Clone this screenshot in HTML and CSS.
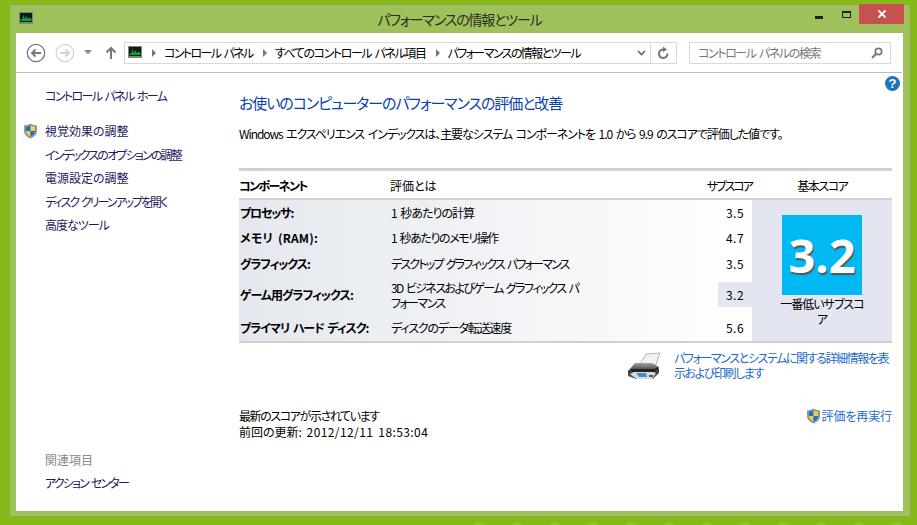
FILE: index.html
```html
<!DOCTYPE html>
<html lang="ja">
  <head>
    <meta charset="UTF-8" />
    <title>パフォーマンスの情報とツール</title>
    <link rel="stylesheet" href="styles.css">
  </head>
  <body>
    <div class="window">
      <div class="titlebar">
        <svg class="app-icon" width="14" height="13" viewBox="0 0 14 13"><rect width="14" height="12" fill="#7c8580"/><rect x="1" y="1" width="12" height="9" fill="#0c1f16"/><path d="M1.5 9 V7.5 L3.5 7 L4.5 3 L6 7 L7.5 4 L9 7 L11 5.5 L12.5 7 V9 Z" fill="#1f9a33"/></svg>
        <div class="title">パフォーマンスの情報とツール</div>
        <div class="win-btns">
          <div class="btn-min"></div>
          <div class="btn-max"></div>
          <div class="btn-close">
            <svg width="10" height="10" viewBox="0 0 10 10"><path d="M1.5 1.5 L8.5 8.5 M8.5 1.5 L1.5 8.5" stroke="#fff" stroke-width="1.8"/></svg>
          </div>
        </div>
      </div>
      <div class="client">
        <div class="toolbar">
          <svg class="nav" width="20" height="20" viewBox="0 0 20 20"><circle cx="10" cy="10" r="8.7" fill="#fff" stroke="#777" stroke-width="1.3"/><path d="M15 10 H6 M9.5 6.5 L6 10 L9.5 13.5" fill="none" stroke="#777" stroke-width="2"/></svg>
          <svg class="nav" width="20" height="20" viewBox="0 0 20 20"><circle cx="10" cy="10" r="8.7" fill="#fff" stroke="#d4d4d4" stroke-width="1.3"/><path d="M5 10 H14 M10.5 6.5 L14 10 L10.5 13.5" fill="none" stroke="#d4d4d4" stroke-width="2"/></svg>
          <svg class="nav-drop" width="8" height="5" viewBox="0 0 8 5"><path d="M0 0 H8 L4 4.5 Z" fill="#8a8a8a"/></svg>
          <svg class="nav-up" width="12" height="14" viewBox="0 0 12 14"><path d="M6 13 V2 M1.5 6.5 L6 2 L10.5 6.5" fill="none" stroke="#777" stroke-width="2"/></svg>
          <div class="address">
            <svg width="14" height="13" viewBox="0 0 14 13"><rect width="14" height="12" fill="#7c8580"/><rect x="1" y="1" width="12" height="9" fill="#0c1f16"/><path d="M1.5 9 V7.5 L3.5 7 L4.5 3 L6 7 L7.5 4 L9 7 L11 5.5 L12.5 7 V9 Z" fill="#1f9a33"/></svg>
            <span class="crumb-arrow"></span>
            <span class="ls16">コントロール パネル</span>
            <span class="crumb-arrow"></span>
            <span class="ls14">すべてのコントロール パネル項目</span>
            <span class="crumb-arrow"></span>
            <span class="ls16">パフォーマンスの情報とツール</span>
            <svg class="addr-chevron" width="9" height="6" viewBox="0 0 9 6"><path d="M1 1 L4.5 4.5 L8 1" fill="none" stroke="#666" stroke-width="1.6"/></svg>
            <div class="addr-refresh">
              <svg width="13" height="14" viewBox="0 0 13 14"><path d="M10.5 7.5 A4.3 4.3 0 1 1 6.5 3.4" fill="none" stroke="#777" stroke-width="2"/><path d="M6 0.5 L10 3.4 L6 6.2 Z" fill="#777"/></svg>
            </div>
          </div>
          <div class="search">
            <span class="ls14">コントロール パネルの検索</span>
            <svg width="12" height="12" viewBox="0 0 12 12"><circle cx="7.5" cy="4.5" r="3.2" fill="none" stroke="#777" stroke-width="1.7"/><path d="M5 7 L1 11" stroke="#777" stroke-width="2.2"/></svg>
          </div>
        </div>
        <div class="content">
          <div class="side">
            <a class="ls16">コントロール パネル ホーム</a>
            <div class="side-links">
              <a class="shield-link">
                <svg class="shield" width="15" height="16" viewBox="0 0 15 16"><path d="M7.5 0.5 C10 2 12 2.4 14 2.4 V8 C14 11.5 11 14.3 7.5 15.5 C4 14.3 1 11.5 1 8 V2.4 C3 2.4 5 2 7.5 0.5 Z" fill="#8b97a3"/><path d="M7.5 2.5 V8 H3 V3.8 C4.8 3.6 6 3.2 7.5 2.5 Z" fill="#1f6fc4"/><path d="M7.5 2.5 C9 3.2 10.2 3.6 12 3.8 V8 H7.5 Z" fill="#f6cf3d"/><path d="M3 8 H7.5 V13.4 C5 12.4 3 10.5 3 8 Z" fill="#f6cf3d"/><path d="M7.5 8 H12 C12 10.5 10 12.4 7.5 13.4 Z" fill="#1f6fc4"/></svg>
                視覚効果の調整
              </a>
              <a class="ls18">インデックスのオプションの調整</a>
              <a>電源設定の調整</a>
              <a class="ls20">ディスク クリーンアップを開く</a>
              <a class="ls10">高度なツール</a>
            </div>
            <div class="side-foot">
              <div class="side-related">関連項目</div>
              <a class="ls18">アクション センター</a>
            </div>
          </div>
          <div class="main">
            <div class="help">?</div>
            <h1>お使いのコンピューターのパフォーマンスの評価と改善</h1>
            <p class="lead">Windows エクスペリエンス インデックスは、主要なシステム コンポーネントを 1.0 から 9.9 のスコアで評価した値です。</p>
            <div class="table">
              <div class="thead">
                <div class="col-name ls16">コンポーネント</div>
                <div class="col-desc">評価とは</div>
                <div class="col-sub ls20">サブスコア</div>
                <div class="col-base ls14">基本スコア</div>
              </div>
              <div class="tbody">
                <div class="rows">
                  <div class="row r1">
                    <div class="cell-name ls12">プロセッサ:</div>
                    <div class="cell-desc ls10">1 秒あたりの計算</div>
                    <div class="cell-sub">3.5</div>
                  </div>
                  <div class="row r1">
                    <div class="cell-name ram">メモリ (RAM):</div>
                    <div class="cell-desc ls14">1 秒あたりのメモリ操作</div>
                    <div class="cell-sub">4.7</div>
                  </div>
                  <div class="row r3">
                    <div class="cell-name ls10">グラフィックス:</div>
                    <div class="cell-desc ls18">デスクトップ グラフィックス パフォーマンス</div>
                    <div class="cell-sub">3.5</div>
                  </div>
                  <div class="row r4">
                    <div class="cell-name ls9">ゲーム用グラフィックス:</div>
                    <div class="cell-desc ls16">3D ビジネスおよびゲーム グラフィックス パフォーマンス</div>
                    <div class="cell-sub-wrap"><div class="cell-sub low">3.2</div></div>
                  </div>
                  <div class="row r5">
                    <div class="cell-name ls10">プライマリ ハード ディスク:</div>
                    <div class="cell-desc ls12">ディスクのデータ転送速度</div>
                    <div class="cell-sub">5.6</div>
                  </div>
                </div>
                <div class="base">
                  <div class="score">3.2</div>
                  <div class="score-note ls10">一番低いサブスコア</div>
                </div>
              </div>
            </div>
            <div class="print-row">
              <svg class="printer" width="34" height="30" viewBox="0 0 34 30">
                <defs>
                  <linearGradient id="bodyGrad" x1="0" y1="0" x2="0" y2="1">
                    <stop offset="0" stop-color="#a4a4a4"/>
                    <stop offset="0.5" stop-color="#3a3a3a"/>
                    <stop offset="1" stop-color="#666"/>
                  </linearGradient>
                </defs>
                <path d="M13 12 L19 2 L33 1 L29 13 Z" fill="#f1f1f1" stroke="#a5a5a5" stroke-width="0.8"/>
                <path d="M1 19 L8 11 H25 L32 15 V21 L26 27 H9 L1 24 Z" fill="url(#bodyGrad)"/>
                <path d="M4 17 H28 L31 15 V17 L27 20 H5 Z" fill="#222"/>
                <path d="M3 22 L7 20 H26 L29 21 L25 27 H10 Z" fill="#d8dcdc"/>
                <path d="M9 21 L19 21 L20 25 L12 25 Z" fill="#3c8ed3"/>
                <path d="M22 23 H26 V25 H22 Z" fill="#555"/>
              </svg>
              <a class="print-link ls14">パフォーマンスとシステムに関する詳細情報を表示および印刷します</a>
            </div>
            <div class="status-row">
              <div>
                <div class="ls14">最新のスコアが示されています</div>
                <div>前回の更新: <span class="stamp">2012/12/11 18:53:04</span></div>
              </div>
              <a class="rerun">
                <svg width="15" height="16" viewBox="0 0 15 16"><path d="M7.5 0.5 C10 2 12 2.4 14 2.4 V8 C14 11.5 11 14.3 7.5 15.5 C4 14.3 1 11.5 1 8 V2.4 C3 2.4 5 2 7.5 0.5 Z" fill="#8b97a3"/><path d="M7.5 2.5 V8 H3 V3.8 C4.8 3.6 6 3.2 7.5 2.5 Z" fill="#1f6fc4"/><path d="M7.5 2.5 C9 3.2 10.2 3.6 12 3.8 V8 H7.5 Z" fill="#f6cf3d"/><path d="M3 8 H7.5 V13.4 C5 12.4 3 10.5 3 8 Z" fill="#f6cf3d"/><path d="M7.5 8 H12 C12 10.5 10 12.4 7.5 13.4 Z" fill="#1f6fc4"/></svg>
                評価を再実行
              </a>
            </div>
          </div>
        </div>
      </div>
    </div>
  </body>
</html>
```

FILE: styles.css
```css
html, body {
  margin: 0;
  padding: 0;
}

body {
  position: relative;
  width: 917px;
  height: 525px;
  overflow: hidden;
  background: #86b918;
  font-family: "Noto Sans CJK JP", "Noto Sans", sans-serif;
  font-feature-settings: "palt";
  font-size: 12px;
  word-spacing: 2px;
  color: #000;
}

/* wallpaper blotches, only the right half shows them */
body::before {
  content: "";
  position: absolute;
  top: 0;
  bottom: 0;
  left: 460px;
  right: 0;
  background-image: radial-gradient(circle, rgba(178, 214, 96, 0.4) 0 5px, transparent 8px);
  background-size: 38px 46px;
}

a {
  color: #1a1a5e;
  display: block;
}

/* kana runs are much narrower in the original UI font */
.ls9 { letter-spacing: -0.9px; }
.ls10 { letter-spacing: -1px; }
.ls12 { letter-spacing: -1.2px; }
.ls14 { letter-spacing: -1.4px; }
.ls16 { letter-spacing: -1.6px; }
.ls18 { letter-spacing: -1.8px; }
.ls20 { letter-spacing: -2px; }

.window {
  position: relative;
  width: 902px;
  height: 513px;
  margin: 0;
  top: 4px;
  left: 9px;
  background: #9fc15c;
  box-shadow: inset 0 0 0 1px #8aad45;
  display: flex;
  flex-direction: column;
  padding: 0 8px 6px 7px;
  box-sizing: border-box;
}

.titlebar {
  height: 29px;
  flex: none;
  display: flex;
  align-items: flex-start;
  position: relative;
}

.app-icon {
  margin: 8px 0 0 3px;
}

.title {
  position: absolute;
  left: 0;
  right: 0;
  top: 6px;
  text-align: center;
  font-size: 14px;
  line-height: 18px;
  letter-spacing: -1.15px;
  color: #2c2c1f;
}

.win-btns {
  margin-left: auto;
  margin-right: -1px;
  display: flex;
  position: relative;
}

.btn-min {
  width: 8px;
  height: 3px;
  background: #222;
  margin: 12px 19px 0 0;
}

.btn-max {
  width: 7px;
  height: 4px;
  border: 1px solid #222;
  border-top-width: 2px;
  margin: 7px 8px 0 0;
}

.btn-close {
  width: 45px;
  height: 20px;
  background: #c75050;
  display: flex;
  align-items: center;
  justify-content: center;
}

.client {
  flex: 1;
  background: #fff;
  display: flex;
  flex-direction: column;
  min-height: 0;
}

.toolbar {
  height: 39px;
  flex: none;
  margin-right: 1px;
  border-bottom: 1px solid #bbb;
  display: flex;
  align-items: center;
  padding-left: 10px;
}

.nav {
  margin-right: 9px;
}

.nav-drop {
  margin-right: 13px;
}

.nav-up {
  margin-right: 7px;
}

.address {
  width: 553px;
  height: 22px;
  box-sizing: border-box;
  border: 1px solid #d9d9d9;
  display: flex;
  align-items: center;
  padding-left: 3px;
  white-space: nowrap;
}

.crumb-arrow {
  width: 0;
  height: 0;
  border-left: 4px solid #777;
  border-top: 4px solid transparent;
  border-bottom: 4px solid transparent;
  margin: 0 8px 0 10px;
}

.addr-chevron {
  margin-left: auto;
  margin-right: 4px;
}

.addr-refresh {
  width: 25px;
  height: 20px;
  border-left: 1px solid #d9d9d9;
  display: flex;
  align-items: center;
  justify-content: center;
}

.search {
  width: 202px;
  height: 22px;
  box-sizing: border-box;
  margin-left: 12px;
  border: 1px solid #d9d9d9;
  display: flex;
  align-items: center;
  justify-content: space-between;
  padding: 0 7px 0 8px;
  color: #777;
  white-space: nowrap;
}

.content {
  flex: 1;
  display: flex;
  min-height: 0;
}

.side {
  width: 222px;
  flex: none;
  padding: 14px 0 0 29px;
  box-sizing: border-box;
  display: flex;
  flex-direction: column;
  line-height: 18px;
}

.side-links {
  margin-top: 17px;
  display: flex;
  flex-direction: column;
  gap: 5.5px;
}

.shield-link {
  position: relative;
}

.shield {
  position: absolute;
  left: -22px;
  top: 1px;
}

.side-foot {
  margin-top: auto;
  padding-bottom: 19px;
}

.side-related {
  color: #8a8a8a;
  font-size: 12px;
  margin-bottom: 5px;
}

.main {
  flex: 1;
  position: relative;
  padding: 20px 11px 0 1px;
  min-width: 0;
}

.help {
  position: absolute;
  right: 3px;
  top: 3px;
  width: 15px;
  height: 15px;
  border-radius: 50%;
  background: #1c74c4;
  color: #fff;
  font-family: "Liberation Sans", sans-serif;
  font-weight: 700;
  font-size: 13px;
  line-height: 15px;
  text-align: center;
}

h1 {
  margin: 0;
  font-weight: 400;
  font-size: 15px;
  line-height: 20px;
  letter-spacing: -1.08px;
  color: #0a3fae;
}

.lead {
  margin: 12px 0 0;
  line-height: 18px;
  letter-spacing: -1.08px;
  white-space: nowrap;
}

.table {
  margin-top: 25px;
}

.thead {
  height: 26px;
  padding-top: 1px;
  border-top: 3px solid #d0d0d0;
  border-bottom: 2px solid #d0d0d0;
  display: flex;
  align-items: center;
  white-space: nowrap;
}

.col-name {
  width: 151px;
  flex: none;
  font-weight: 700;
}

.col-desc {
  width: 197px;
  flex: none;
}

.col-sub {
  margin-left: 119px;
  width: 47px;
  text-align: center;
}

.col-base {
  width: 140px;
  text-align: center;
}

.tbody {
  display: flex;
  border-bottom: 2px solid #d0d0d0;
}

.rows {
  width: 513px;
  flex: none;
  background: linear-gradient(90deg, #e4e8ee, #ffffff);
}

.row {
  display: flex;
  align-items: center;
}

.r1 {
  height: 25px;
}

.r3 {
  height: 26px;
}

.r4 {
  height: 37px;
}

.r5 {
  height: 28px;
}

.cell-name {
  width: 150px;
  flex: none;
  padding-left: 1px;
  font-weight: 700;
  white-space: nowrap;
}

.cell-name.ram {
  letter-spacing: 0.2px;
}

.cell-desc {
  width: 193px;
  flex: none;
  padding: 0 3px 0 1px;
  line-height: 15px;
}

.cell-sub,
.cell-sub-wrap {
  margin-left: 131px;
  width: 34px;
  align-self: stretch;
  background: #fff;
  display: flex;
  align-items: center;
  justify-content: center;
  letter-spacing: 0.5px;
}

.cell-sub.low {
  margin-left: 0;
  align-self: center;
  height: 25px;
  background: #e3e5f1;
}

.base {
  width: 140px;
  flex: none;
  background: #e3e5f1;
  display: flex;
  flex-direction: column;
  align-items: center;
  padding-top: 15px;
}

.score {
  width: 80px;
  height: 80px;
  background: #00b9f2;
  color: #fff;
  font-family: "Open Sans", sans-serif;
  font-weight: 700;
  font-size: 47px;
  line-height: 80px;
  text-align: center;
  text-shadow: 1px 2px 1px #555;
}

.score-note {
  width: 84px;
  text-align: center;
  line-height: 15px;
  margin-top: 1px;
}

.print-row {
  display: flex;
  justify-content: flex-end;
  margin-top: 7px;
  gap: 13px;
}

.printer {
  margin-top: 2px;
}

.print-link {
  width: 218px;
  color: #1b6ac9;
  line-height: 15px;
}

.status-row {
  display: flex;
  justify-content: space-between;
  align-items: flex-start;
  margin-top: 26px;
  line-height: 16px;
}

.stamp {
  letter-spacing: 0.4px;
}

.rerun {
  display: flex;
  align-items: center;
  gap: 1px;
  letter-spacing: -0.1px;
  color: #1b6ac9;
}
```
